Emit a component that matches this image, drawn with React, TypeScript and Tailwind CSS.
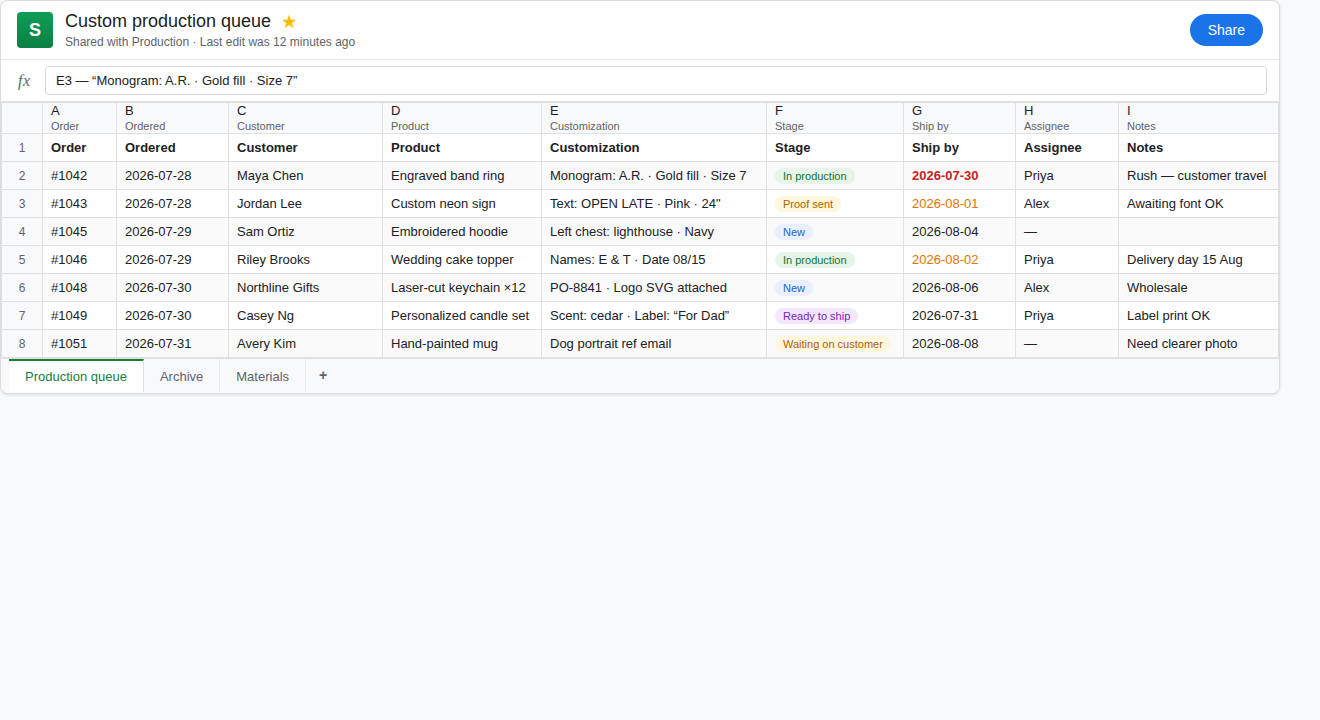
import { clsx } from "clsx";

type Row = {
  order: string;
  ordered: string;
  customer: string;
  product: string;
  customization: string;
  stage: string;
  shipBy: string;
  assignee: string;
  notes: string;
};

const columns = [
  { letter: "A", label: "Order", width: "w-[74px]" },
  { letter: "B", label: "Ordered", width: "w-[112px]" },
  { letter: "C", label: "Customer", width: "w-[154px]" },
  { letter: "D", label: "Product", width: "w-[159px]" },
  { letter: "E", label: "Customization", width: "w-[225px]" },
  { letter: "F", label: "Stage", width: "w-[137px]" },
  { letter: "G", label: "Ship by", width: "w-[112px]" },
  { letter: "H", label: "Assignee", width: "w-[103px]" },
  { letter: "I", label: "Notes", width: "w-[160px]" },
];

const rows: Row[] = [
  { order: "#1042", ordered: "2026-07-28", customer: "Maya Chen", product: "Engraved band ring", customization: "Monogram: A.R. · Gold fill · Size 7", stage: "In production", shipBy: "2026-07-30", assignee: "Priya", notes: "Rush — customer travel" },
  { order: "#1043", ordered: "2026-07-28", customer: "Jordan Lee", product: "Custom neon sign", customization: 'Text: OPEN LATE · Pink · 24"', stage: "Proof sent", shipBy: "2026-08-01", assignee: "Alex", notes: "Awaiting font OK" },
  { order: "#1045", ordered: "2026-07-29", customer: "Sam Ortiz", product: "Embroidered hoodie", customization: "Left chest: lighthouse · Navy", stage: "New", shipBy: "2026-08-04", assignee: "—", notes: "" },
  { order: "#1046", ordered: "2026-07-29", customer: "Riley Brooks", product: "Wedding cake topper", customization: "Names: E & T · Date 08/15", stage: "In production", shipBy: "2026-08-02", assignee: "Priya", notes: "Delivery day 15 Aug" },
  { order: "#1048", ordered: "2026-07-30", customer: "Northline Gifts", product: "Laser-cut keychain ×12", customization: "PO-8841 · Logo SVG attached", stage: "New", shipBy: "2026-08-06", assignee: "Alex", notes: "Wholesale" },
  { order: "#1049", ordered: "2026-07-30", customer: "Casey Ng", product: "Personalized candle set", customization: "Scent: cedar · Label: “For Dad”", stage: "Ready to ship", shipBy: "2026-07-31", assignee: "Priya", notes: "Label print OK" },
  { order: "#1051", ordered: "2026-07-31", customer: "Avery Kim", product: "Hand-painted mug", customization: "Dog portrait ref email", stage: "Waiting on customer", shipBy: "2026-08-08", assignee: "—", notes: "Need clearer photo" },
];

const stageStyles: Record<string, string> = {
  "In production": "bg-[#e6f4ea] text-[#137333]",
  "Proof sent": "bg-[#fef7e0] text-[#b06000]",
  New: "bg-[#e8f0fe] text-[#1967d2]",
  "Ready to ship": "bg-[#f3e8fd] text-[#7627bb]",
  "Waiting on customer": "bg-[#fef7e0] text-[#b06000]",
};

const shipByStyles: Record<string, string> = {
  "2026-07-30": "font-bold text-[#c5221f]",
  "2026-08-01": "text-[#e37400]",
  "2026-08-02": "text-[#e37400]",
};

const cell = "h-7 border border-[#e0e0e0] px-2 py-0 text-left align-middle whitespace-nowrap";

const RowNumber = ({ n }: { n: number }) => (
  <td className="border border-[#e0e0e0] bg-[#f8f9fa] p-0 text-center text-xs text-[#5f6368]">{n}</td>
);

const TitleBar = () => (
  <header className="flex h-[59px] items-center gap-3 border-b border-[#e8eaed] px-4">
    <div className="flex size-9 items-center justify-center rounded bg-linear-to-b from-[#0f9d58] to-[#0b8043] text-lg font-bold text-white">
      S
    </div>
    <div className="flex-1">
      <div className="flex items-center gap-2.5">
        <h1 className="text-lg leading-[22px] text-[#202124]">Custom production queue</h1>
        <svg viewBox="0 0 16 16" className="mt-0.5 size-4 fill-[#fbbc04]">
          <path d="M8 .8l1.75 5h5.35l-4.3 3.25 1.6 5.15L8 11.1l-4.4 3.1 1.6-5.15L.9 5.8h5.35z" />
        </svg>
      </div>
      <p className="mt-0.5 text-xs leading-4 text-[#5f6368]">Shared with Production · Last edit was 12 minutes ago</p>
    </div>
    <button className="h-8 rounded-full bg-[#1a73e8] px-[18px] text-sm font-medium text-white">Share</button>
  </header>
);

const FormulaBar = () => (
  <div className="flex h-[42px] items-center border-b border-[#e0e0e0] pr-3 pl-4">
    <span className="w-7 pl-px font-['Liberation_Serif',serif] text-base tracking-[0.5px] text-[#5f6368] italic">
      fx
    </span>
    <div className="flex h-[29px] flex-1 items-center rounded border border-[#dadce0] px-2.5 text-[13px]">
      E3 — “Monogram: A.R. · Gold fill · Size 7”
    </div>
  </div>
);

const Grid = () => (
  <table className="w-[1278px] table-fixed border-collapse text-[13px] leading-4 text-[#202124]">
    <colgroup>
      <col className="w-[41px]" />
      {columns.map((c) => (
        <col key={c.letter} className={c.width} />
      ))}
    </colgroup>
    <thead>
      <tr className="h-[31px] bg-[#f8f9fa]">
        <th className="border border-[#e0e0e0]" />
        {columns.map((c) => (
          <th key={c.letter} className="border border-[#e0e0e0] px-2 py-0 text-left font-normal">
            <div className="leading-[15px]">{c.letter}</div>
            <div className="pt-px text-[11px] leading-[14px] text-[#5f6368]">{c.label}</div>
          </th>
        ))}
      </tr>
    </thead>
    <tbody>
      <tr>
        <RowNumber n={1} />
        {columns.map((c) => (
          <td key={c.letter} className={clsx(cell, "font-bold")}>
            {c.label}
          </td>
        ))}
      </tr>
      {rows.map((row, i) => (
        <tr key={row.order} className="even:bg-[#fafafa]">
          <RowNumber n={i + 2} />
          <td className={cell}>{row.order}</td>
          <td className={cell}>{row.ordered}</td>
          <td className={cell}>{row.customer}</td>
          <td className={cell}>{row.product}</td>
          <td className={cell}>{row.customization}</td>
          <td className={cell}>
            <span className={clsx("block w-fit rounded-full px-2 text-[11px] leading-4", stageStyles[row.stage])}>
              {row.stage}
            </span>
          </td>
          <td className={clsx(cell, shipByStyles[row.shipBy])}>{row.shipBy}</td>
          <td className={cell}>{row.assignee}</td>
          <td className={cell}>{row.notes}</td>
        </tr>
      ))}
    </tbody>
  </table>
);

const SheetTabs = () => (
  <div className="flex h-[35px] border-t border-[#e0e0e0] bg-[#f8f9fa] pb-px pl-2 text-[13px] text-[#5f6368]">
    <button className="border-t-2 border-r border-t-[#188038] border-r-[#e0e0e0] bg-white px-4 text-[#188038]">
      Production queue
    </button>
    <button className="border-t-2 border-r border-t-transparent border-r-[#e8eaed] px-4">Archive</button>
    <button className="border-t-2 border-r border-t-transparent border-r-[#e8eaed] px-4">Materials</button>
    <button className="px-[13px] pb-0.5 text-sm font-bold">+</button>
  </div>
);

export default function App() {
  return (
    <div className="min-h-screen bg-[#f8f9fa] font-['Liberation_Sans',Arial,sans-serif] text-[#202124]">
      <div className="w-[1280px] overflow-hidden rounded-lg border border-[#dadce0] bg-white shadow-[0_1px_3px_rgba(60,64,67,0.15)]">
        <TitleBar />
        <FormulaBar />
        <Grid />
        <SheetTabs />
      </div>
    </div>
  );
}
